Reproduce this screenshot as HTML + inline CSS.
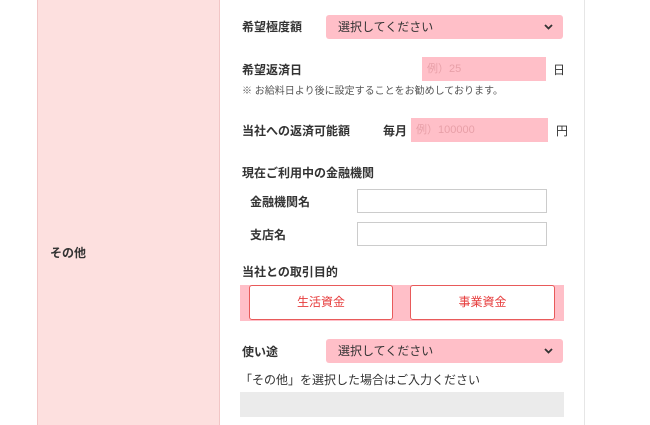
<!DOCTYPE html>
<html><head><meta charset="utf-8"><style>
body{margin:0;width:650px;height:425px;overflow:hidden;background:#fff;font-family:"Liberation Sans","Noto Sans CJK JP",sans-serif;color:#333;position:relative}
div{position:absolute;box-sizing:border-box}
.b{font-weight:bold;font-size:12px;line-height:14px}
.sel{background:#ffbfc8;border-radius:3px;height:24px;font-size:12px;line-height:24px;padding-left:12px;color:#333}
.sel svg{position:absolute;right:10px;top:9px}
.inp{background:#ffbfc8;height:24px;font-size:11px;line-height:24px;padding-left:5px;color:#e8a0a8}
.w{background:#fff;border:1px solid #ccc;height:24px}
.btn{background:#fff;border:1px solid #e85a5a;border-radius:3px;color:#e63c3c;font-size:12px;text-align:center;line-height:33px;height:35px;top:285px}
</style></head><body>
<div style="left:37px;top:0;width:183px;height:425px;background:#fde0df;border-left:1px solid #f2c6c6;border-right:1px solid #f2c6c6"></div>
<div style="left:584px;top:0;width:1px;height:425px;background:#e6e6e6"></div>
<div class="b" style="left:50px;top:246px">その他</div>

<div class="b" style="left:242px;top:20px">希望極度額</div>
<div class="sel" style="left:326px;top:15px;width:237px">選択してください<svg width="9" height="6" viewBox="0 0 9 6"><path d="M1 1L4.5 4.5L8 1" stroke="#333" stroke-width="1.8" fill="none"/></svg></div>

<div class="b" style="left:242px;top:63px">希望返済日</div>
<div class="inp" style="left:422px;top:57px;width:124px">例）25</div>
<div class="b" style="left:553px;top:63px;font-weight:normal">日</div>
<div style="left:242px;top:86px;font-size:10px;color:#555;line-height:12px">※ お給料日より後に設定することをお勧めしております。</div>

<div class="b" style="left:242px;top:124px">当社への返済可能額</div>
<div class="b" style="left:383px;top:124px">毎月</div>
<div class="inp" style="left:411px;top:118px;width:137px">例）100000</div>
<div class="b" style="left:556px;top:124px;font-weight:normal">円</div>

<div class="b" style="left:242px;top:166px">現在ご利用中の金融機関</div>
<div class="b" style="left:250px;top:195px">金融機関名</div>
<div class="w" style="left:357px;top:189px;width:190px"></div>
<div class="b" style="left:250px;top:228px">支店名</div>
<div class="w" style="left:357px;top:222px;width:190px"></div>

<div class="b" style="left:242px;top:265px">当社との取引目的</div>
<div style="left:240px;top:285px;width:324px;height:36px;background:#ffbfc8"></div>
<div class="btn" style="left:249px;width:144px">生活資金</div>
<div class="btn" style="left:410px;width:145px">事業資金</div>

<div class="b" style="left:242px;top:345px">使い途</div>
<div class="sel" style="left:326px;top:339px;width:237px">選択してください<svg width="9" height="6" viewBox="0 0 9 6"><path d="M1 1L4.5 4.5L8 1" stroke="#333" stroke-width="1.8" fill="none"/></svg></div>
<div style="left:240px;top:373px;font-size:12px;line-height:14px">「その他」を選択した場合はご入力ください</div>
<div style="left:240px;top:392px;width:324px;height:25px;background:#ebebeb"></div>
</body></html>
